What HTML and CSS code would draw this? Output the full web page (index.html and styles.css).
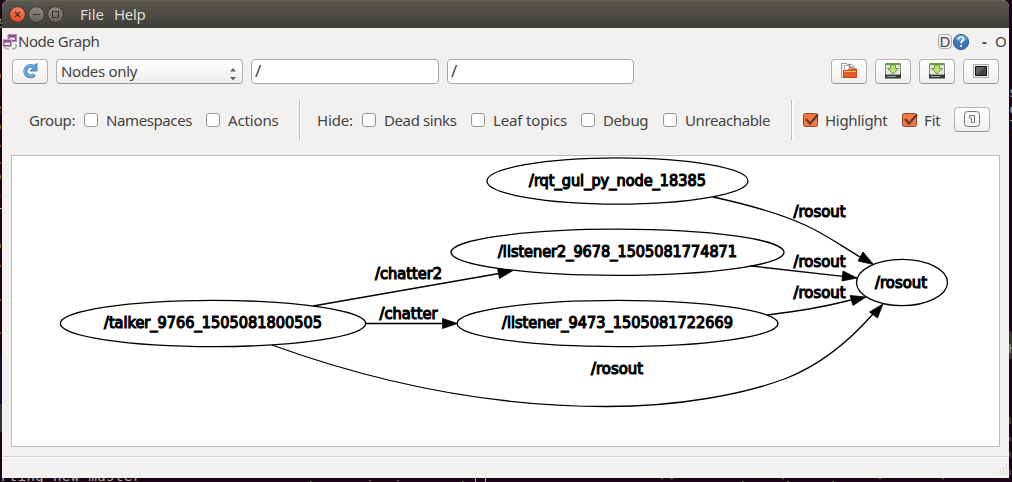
FILE: index.html
```html
<!DOCTYPE html>
<html lang="en">
<head>
<meta charset="utf-8">
<title>Node Graph</title>
<link rel="stylesheet" href="styles.css">
</head>
<body>
<svg class="desktop" width="1012" height="482" viewBox="0 0 1012 482">
  <path d="M0 355h2v49H0z" fill="#0c1238"/><path d="M0 404h2v28H0zM1009 331h3v28h-3z" fill="#34332f"/>
  <g class="term">
    <text x="0" y="481" textLength="141">rting new master</text>
    <text x="-6" y="29">/</text><text x="-7" y="80">o</text><text x="-7" y="96">s</text><text x="-7" y="113">e</text><text x="-7" y="131">o</text><text x="-7" y="181">o</text><text x="-7" y="198">s</text><text x="-7" y="250">o</text>
    <text x="1009" y="97">s</text><text x="1009" y="114">c</text><text x="1009" y="131">l</text>
  </g>
  <path d="M0 23h2M0 27h2M0 208.500h2M475.500 478v4M485.500 478v4M1010 344v9M1010 348h2" stroke="#aaa"/>
  <path d="M0 146h1M0 163h1M0 266h1M0 300h1M0 333h1" stroke="#a4481f" stroke-width="2"/>
  <path d="M310 481.500h2M369 480.500h2M397 480.500h2M462 481.500h2M661 478.500h2M670 478.500h3M742 481.500h2M782 478.500h2M787 481.500h2M832 481.500h2M879 478.500h2M942 478.500h2M1010 417v7M1010 437v4M1010 452v5M1010 470v5" stroke="#5f704f"/>
</svg>
<main class="window">
  <header class="titlebar">
    <svg width="64" height="28" viewBox="0 0 64 28">
      <defs>
        <linearGradient id="close" x2="0" y2="1"><stop stop-color="#f58060"/><stop offset="1" stop-color="#e24d20"/></linearGradient>
        <linearGradient id="grey" x2="0" y2="1"><stop stop-color="#8b8981"/><stop offset="1" stop-color="#66645c"/></linearGradient>
      </defs>
      <g stroke="#35342f"><circle cx="15.500" cy="14.500" r="7.900" fill="url(#close)"/><circle cx="34.500" cy="14.500" r="7.900" fill="url(#grey)"/><circle cx="53.500" cy="14.500" r="7.900" fill="url(#grey)"/></g>
      <path d="M13 12l5 5M18 12l-5 5M31 14.500h7M50.500 11.500h6v6h-6z" fill="none" stroke="#363530" stroke-width="1.200"/>
    </svg>
    <span class="menu file">File</span><span class="menu help">Help</span>
  </header>
  <div class="dock-title">
    <svg width="16" height="18" viewBox="0 0 16 18">
      <path d="M2 14l3 2h2M10 15.500h3l1.500-2-1-2.500" fill="none" stroke="#aaa" stroke-width="1.500"/>
      <path d="M6 1.500h8.500v7H6z" fill="#8b4f90" stroke="#b18bb1"/><path d="M7.500 4.500h5.500V7H7.500z" fill="#eadcec"/>
      <path d="M1 6.500h8.500v7H1z" fill="#8b4f90" stroke="#c3a9c3"/><path d="M2.500 9.500H8V12H2.500z" fill="#eadcec"/>
    </svg>
    <span class="name">Node Graph</span>
    <span class="dock-d">D</span>
    <svg class="question" width="18" height="18" viewBox="0 0 18 18"><circle cx="9" cy="9" r="7.600" fill="#3b78b5" stroke="#235f98"/><path d="M3 7a6 5 0 0 1 12 0q-6 3-12 0" fill="#6a9dce"/><path d="M6.500 6.500c0-3.500 5.500-3 5 0-.3 1.700-2.500 1.500-2.500 4" fill="none" stroke="#fff" stroke-width="1.700"/><circle cx="9" cy="13" r="1.100" fill="#fff"/></svg>
    <span class="dash">-</span><span class="oh">O</span>
  </div>
  <div class="tools">
    <button class="btn"><svg width="18" height="18" viewBox="0 0 18 18"><path d="M13.500 12.500A5.200 5.200 0 1 1 12 4.500" fill="none" stroke="#4a86be" stroke-width="4"/><path d="M16 1.500V9H9l2.500-2.500L10.500 5z" fill="#5c9bd2" stroke="#4a86be"/><path d="M13.200 12.200A5.200 5.200 0 1 1 12.500 5" fill="none" stroke="#6daade" stroke-width="2.200"/></svg></button>
    <div class="select"><span class="t">Nodes only</span><svg width="8" height="14" viewBox="0 0 8 14"><path d="M1 4.500L4 1l3 3.500zM1 10h6L4 13.500z" fill="#666"/></svg></div>
    <div class="input">/</div><div class="input second">/</div>
    <button class="btn open"><svg width="18" height="18" viewBox="0 0 18 18"><path d="M1.500 15.500v-14h5l1 1h4l3 3v9z" fill="#eee" stroke="#999"/><path d="M4.500 13V3.500h5l3 3" fill="#fff" stroke="#aaa"/><path d="M9.500 1.500v4h4" fill="none" stroke="#888"/><path d="M3.500 15.500v-7h4l1-1.500h8v8.500z" fill="#e75b22" stroke="#c54818"/><path d="M4 9.500h12" stroke="#ffb187"/></svg></button>
    <button class="btn"><svg width="18" height="18" viewBox="0 0 18 18"><path d="M1.500 1.500h15v12h-15z" fill="#e4e5df" stroke="#888"/><path d="M2 2h14" stroke="#669b45" stroke-width="2"/><path d="M6.500 3v3.500H3.500L9 12l5.500-5.500h-3V3z" fill="#b9dc78" stroke="#6aa03c"/><path d="M1 12h16v4.500H1z" fill="#343838"/><path d="M2 12.500h14M3 14.500h9" stroke="#9ba09e"/></svg></button>
    <button class="btn"><svg width="18" height="18" viewBox="0 0 18 18"><path d="M1.500 1.500h15v12h-15z" fill="#e4e5df" stroke="#888"/><path d="M2 2h14" stroke="#669b45" stroke-width="2"/><path d="M6.500 3v3.500H3.500L9 12l5.500-5.500h-3V3z" fill="#b9dc78" stroke="#6aa03c"/><path d="M1 12h16v4.500H1z" fill="#343838"/><path d="M2 12.500h14M3 14.500h9" stroke="#9ba09e"/></svg></button>
    <button class="btn"><svg width="18" height="18" viewBox="0 0 18 18"><path d="M1.500 2.500h15v13h-15z" fill="#eee" stroke="#aaa"/><path d="M3.500 4.500h11v9h-11z" fill="#444" stroke="#111"/><path d="M4 13V5h9z" fill="#636363"/></svg></button>
  </div>
  <div class="filters">
    <span class="lab tight w-group">Group:</span>
    <i class="box"></i><span class="lab tight w-names">Namespaces</span>
    <i class="box"></i><span class="lab w-actions">Actions</span>
    <i class="sep"></i>
    <span class="lab w-hide">Hide:</span>
    <i class="box"></i><span class="lab tight w-dead">Dead sinks</span>
    <i class="box"></i><span class="lab w-leaf">Leaf topics</span>
    <i class="box"></i><span class="lab tight w-debug">Debug</span>
    <i class="box"></i><span class="lab tight w-unreach">Unreachable</span>
    <i class="sep"></i>
    <svg class="check" width="18" height="18" viewBox="0 0 18 18"><rect x="1.500" y="2.500" width="14" height="13" rx="2" fill="#f07847" stroke="#8d482e"/><path d="M4 8l4 4.500L16 3.500" fill="none" stroke="#653829" stroke-width="2.200"/></svg><span class="lab w-high">Highlight</span>
    <svg class="check" width="18" height="18" viewBox="0 0 18 18"><rect x="1.500" y="2.500" width="14" height="13" rx="2" fill="#f07847" stroke="#8d482e"/><path d="M4 8l4 4.500L16 3.500" fill="none" stroke="#653829" stroke-width="2.200"/></svg><span class="lab w-fit">Fit</span>
    <button class="btn"><svg width="18" height="18" viewBox="0 0 18 18"><rect x="1.500" y="1.500" width="15" height="15" rx="3" fill="#f5f5f5" stroke="#777"/><path d="M6.500 5.500h5v7h-3V8h-2z" fill="#fff" stroke="#777"/></svg></button>
  </div>
  <svg class="graph" viewBox="12 156 987 290">
    <g class="edges">
      <path d="M713 197C750 205 785 216 805 225S840 245 860 257"/>
      <path d="M751 266L843 276.300"/>
      <path d="M767 315C798 311 820 308 851 300"/>
      <path d="M313 306L499 273.500"/>
      <path d="M366 323.500H443"/>
      <path d="M272 345C352 374 470 406.500 607 406.500C680 406.500 745 394 787 378C822 364 851 339 873 314"/>
    </g>
    <g class="heads">
      <path d="M873.500 264.500L863 252l-5 9z"/><path d="M857 278l-14-7-1 10z"/><path d="M866 297l-16-1.500 3 10z"/><path d="M883 304l-13.500 8 8 6z"/><path d="M513 270.500l-15.500-2 2 10z"/><path d="M457.500 323.500l-15-5v10z"/>
    </g>
    <g class="nodes">
      <ellipse cx="617.500" cy="181" rx="130.500" ry="23.100"/><ellipse cx="617.500" cy="252.300" rx="166.500" ry="23.100"/><ellipse cx="617.500" cy="323.500" rx="160.500" ry="23.100"/><ellipse cx="213" cy="323.500" rx="152.700" ry="23.100"/><ellipse cx="902" cy="282.500" rx="45.500" ry="23.100"/>
    </g>
    <g class="names">
      <text x="529" y="186" textLength="177" lengthAdjust="spacingAndGlyphs">/rqt_gui_py_node_18385</text>
      <text x="498" y="257" textLength="239" lengthAdjust="spacingAndGlyphs">/listener2_9678_1505081774871</text>
      <text x="502" y="328" textLength="231" lengthAdjust="spacingAndGlyphs">/listener_9473_1505081722669</text>
      <text x="104" y="328" textLength="218" lengthAdjust="spacingAndGlyphs">/talker_9766_1505081800505</text>
      <text x="875" y="287.500" textLength="52" lengthAdjust="spacingAndGlyphs">/rosout</text>
      <text x="793.500" y="217" textLength="52" lengthAdjust="spacingAndGlyphs">/rosout</text>
      <text x="793.500" y="267" textLength="52" lengthAdjust="spacingAndGlyphs">/rosout</text>
      <text x="793.500" y="297.500" textLength="52" lengthAdjust="spacingAndGlyphs">/rosout</text>
      <text x="591" y="374" textLength="52" lengthAdjust="spacingAndGlyphs">/rosout</text>
      <text x="375" y="279" textLength="67" lengthAdjust="spacingAndGlyphs">/chatter2</text>
      <text x="379.500" y="318.500" textLength="58" lengthAdjust="spacingAndGlyphs">/chatter</text>
    </g>
  </svg>
  <footer class="status"><svg width="12" height="12" viewBox="0 0 12 12"><path d="M10 1h1M7 4h1M10 4h1M4 7h1M7 7h1M10 7h1M1 10h1M4 10h1M7 10h1M10 10h1" stroke="#bdbbb6"/></svg></footer>
</main>
</body>
</html>
```
FILE: styles.css
```css
* { box-sizing: border-box; }
body { margin: 0; width: 1012px; height: 482px; overflow: hidden; background: #1c0616; font: 15px "Noto Sans", sans-serif; color: #444; display: grid; }
.desktop, .window { grid-area: 1 / 1; }
.term { font: 14px "DejaVu Sans Mono", monospace; fill: #aaa; }
.window { z-index: 1; width: 1007px; height: 478px; margin-left: 2px; background: #f2f1f0; border-radius: 7px 7px 0 0; overflow: hidden; display: flex; flex-direction: column; }
.titlebar { height: 28px; flex: none; display: flex; background: linear-gradient(#64625a 0, #59574f 2px, #3f3e39 100%); color: #dfdbd2; line-height: 29px; }
.menu { white-space: nowrap; }
.file { margin-left: 14px; width: 34px; }
.help { letter-spacing: -.3px; }
.dock-title { height: 27px; flex: none; display: flex; align-items: center; line-height: 27px; }
.name { flex: 1; letter-spacing: -.45px; }
.dock-d { width: 14px; height: 15px; line-height: 13px; text-align: center; border: 1px solid #aaa; border-radius: 4px; }
.dash { margin-left: 12px; width: 13px; font-weight: bold; }
.oh { width: 14px; }
.tools { height: 33px; flex: none; display: flex; gap: 8px; padding: 4px 10px; }
.btn { width: 36px; height: 25px; flex: none; padding: 0 0 1px; display: flex; align-items: center; justify-content: center; border: 1px solid #b5b3af; border-bottom-color: #999793; border-radius: 4px; background: linear-gradient(#fff, #f0efee); }
.select { width: 187px; height: 25px; line-height: 23px; display: flex; align-items: center; justify-content: space-between; padding: 0 5px 0 4px; border: 1px solid #b5b3af; border-bottom-color: #999793; border-radius: 4px; background: linear-gradient(#fff, #eeedeb); }
.t { letter-spacing: -.3px; padding-bottom: 1px; }
.select svg { margin-top: 4px; }
.input { width: 188px; height: 25px; padding-left: 3px; font-size: 17px; line-height: 22px; border: 1px solid #aaa7a3; border-radius: 4px; background: #fff; }
.second { width: 187px; }
.open { margin-left: auto; }
.filters { height: 67px; flex: none; display: flex; align-items: center; padding: 0 0 3px 27px; }
.lab { flex: none; white-space: nowrap; line-height: 20px; letter-spacing: -.15px; }
.tight { letter-spacing: -.4px; }
.box { flex: none; width: 14px; height: 14px; margin-right: 8px; border: 1px solid #999792; border-radius: 3px; background: #fff; }
.check { flex: none; width: 18px; margin-right: 5px; }
.sep { flex: none; width: 2px; height: 40px; border-left: 1px solid #c2c0bd; background: #fff; }
.w-group { width: 55px; }
.w-names { width: 100px; }
.w-actions { width: 71px; }
.w-hide { width: 45px; margin-left: 16px; }
.w-dead { width: 87px; }
.w-leaf { width: 88px; }
.w-debug { width: 60px; }
.w-unreach { width: 106px; }
.sep + .check { margin-left: 9px; }
.w-high { width: 76px; letter-spacing: -.3px; }
.w-fit { width: 30px; }
.filters .btn { margin-bottom: 1px; }
.graph { flex: none; width: 989px; height: 292px; margin-left: 9px; background: #fff; border: 1px solid #bdbbb5; }
.edges, .nodes { fill: none; stroke: #000; stroke-width: 1.3; }
.heads { stroke: #000; stroke-width: .8; }
.names { font: 15px "DejaVu Sans", sans-serif; fill: #000; stroke: #000; stroke-width: 1.15px; }
.status { height: 22px; flex: none; margin-top: 9px; border-top: 1px solid #d5d3d0; box-shadow: inset 0 1px #fff; display: flex; justify-content: flex-end; align-items: flex-end; padding: 0 1px 2px; }
```
